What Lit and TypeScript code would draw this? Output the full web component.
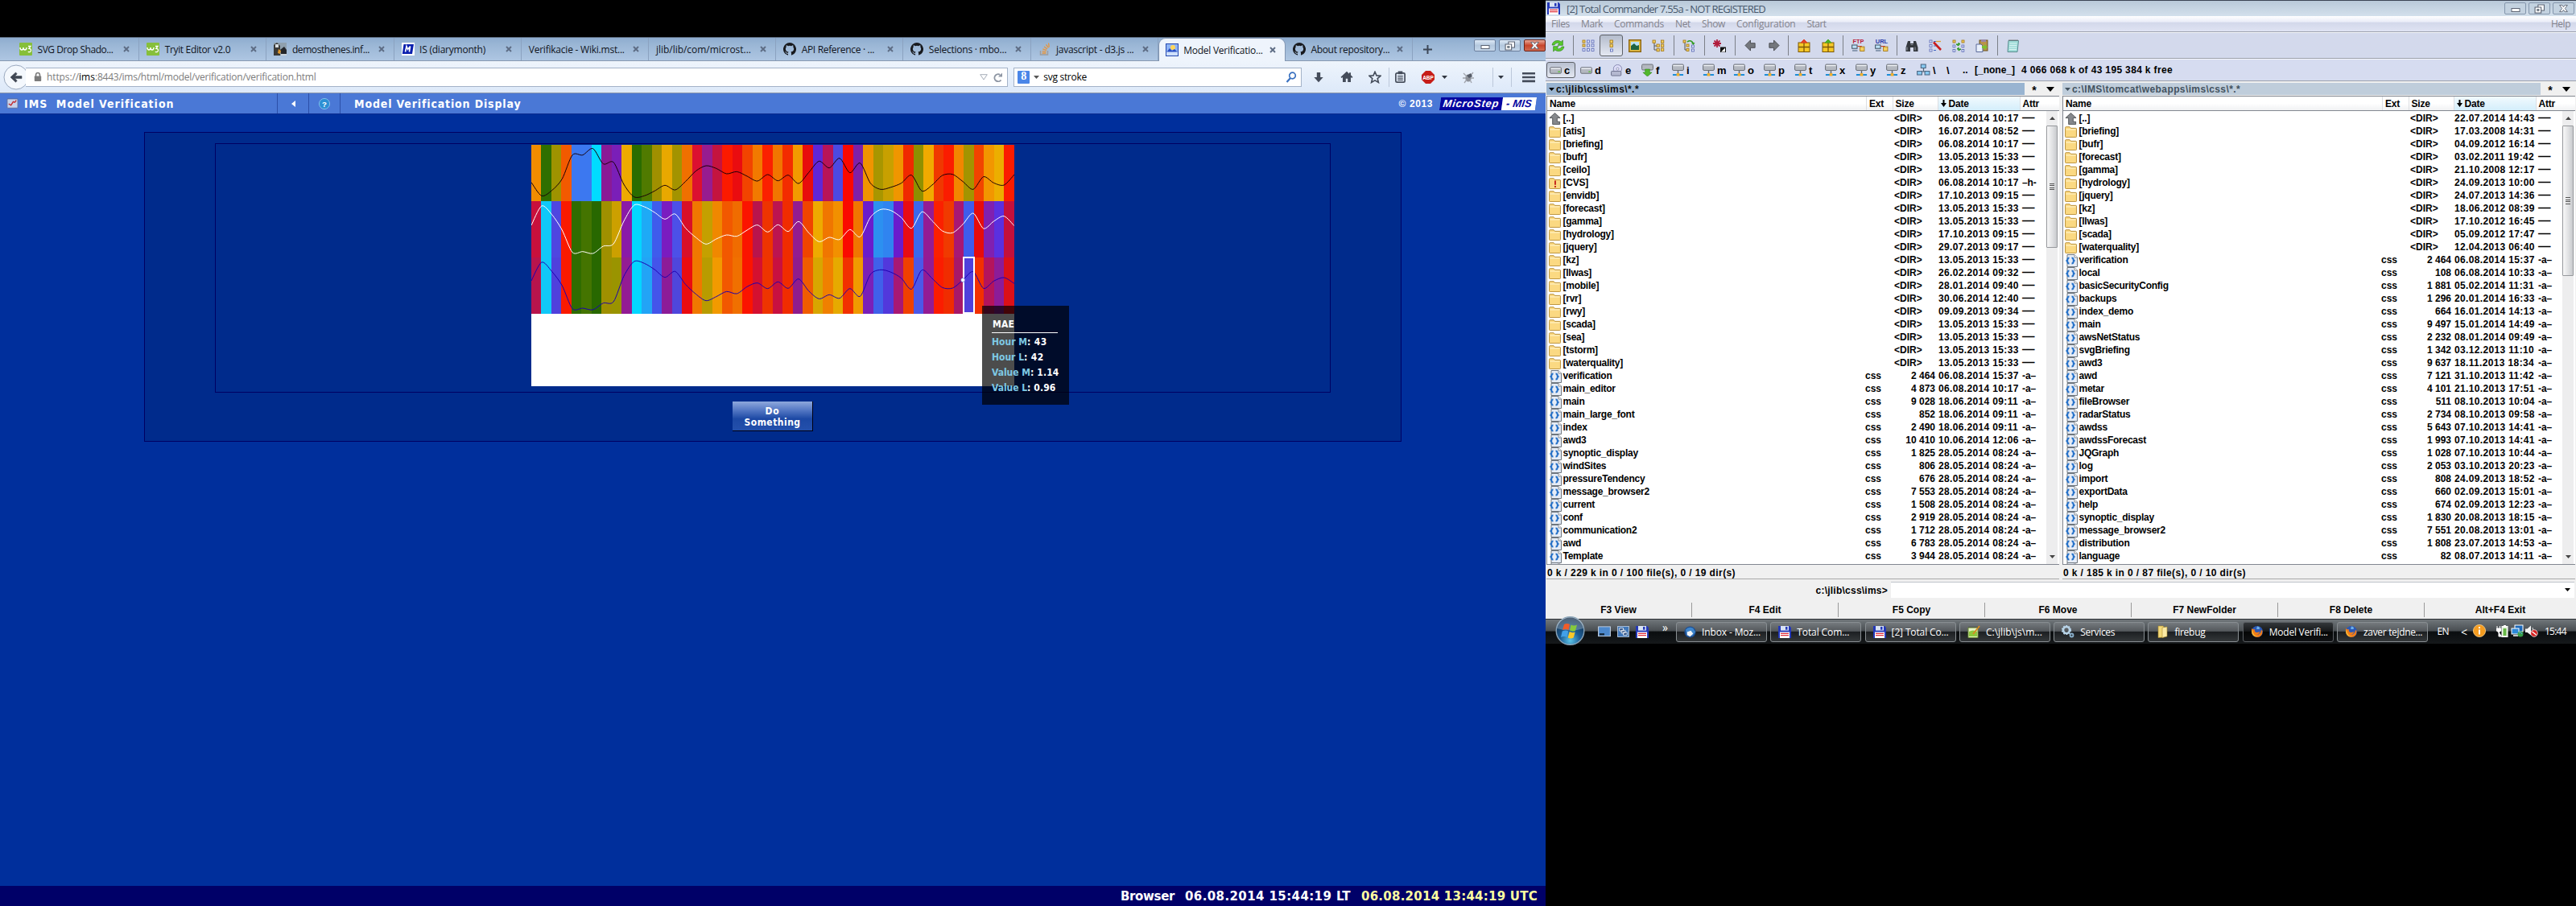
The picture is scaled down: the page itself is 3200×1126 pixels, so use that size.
import { LitElement, html, svg, css, nothing } from "lit";
import { customElement, property } from "lit/decorators.js";

/* ---------- text that is spaced out to a given width ---------- */
@customElement("fit-text")
class FitText extends LitElement {
  @property() text = "";
  @property({ type: Number }) w = 0;
  static styles = css`
    :host { display: inline-block; white-space: pre; flex: none; }
    .t { display: inline-block; }
  `;
  render() {
    return html`<span class="t">${this.text}</span>`;
  }
  updated() {
    const t = this.renderRoot.querySelector(".t") as HTMLElement;
    t.style.letterSpacing = "0";
    const natural = t.getBoundingClientRect().width;
    if (this.w) {
      t.style.letterSpacing = `${(this.w - natural) / this.text.length}px`;
      this.style.width = `${this.w}px`;
    }
  }
}
const fit = (text: string, w: number) => html`<fit-text .text=${text} .w=${w}></fit-text>`;

/* ---------- icons ---------- */
const ic = (body: unknown, w = 16, h = 16, vb = "0 0 16 16") =>
  html`<svg class="ic" width=${w} height=${h} viewBox=${vb} preserveAspectRatio="none">${body}</svg>`;

const w3Icon = ic(svg`<rect width="16" height="16" rx="1" fill="#86bf3a"/><path d="M1 6q0 3 2 3t2-3q0 3 2 3t2-3" fill="none" stroke="#fff" stroke-width="1.4"/><path d="M11 4.5h3l-2 2.8q3 0 2.400 3-1 2.200-3.600 1" fill="none" stroke="#fff" stroke-width="1.300"/>`);
const demoIcon = ic(svg`<rect width="16" height="16" fill="#8fa0ae"/><path d="M0 3l4-3 4 4v12H0z" fill="#3a3a38"/><path d="M2 2h4v4H2z" fill="#d8dde0"/><path d="M8 9l5-4 3 4v5H9z" fill="#23262b"/><path d="M6 8l3 2-1 4-3-1z" fill="#e0982c"/><path d="M9 14h7v2H9z" fill="#c8d2da"/>`);
const isIcon = ic(svg`<rect width="16" height="16" fill="#fff"/><path d="M2.500 2H15l-2 12H.8z" fill="#0a1fae"/><path d="M4.500 11.500L6 4.500l1.600 4 3-4-1.200 7" fill="none" stroke="#fff" stroke-width="1.600"/>`);
const ghIcon = ic(svg`<path fill="#181a1e" fill-rule="evenodd" d="M8 0a8 8 0 0 0-2.530 15.590c.4.070.550-.170.550-.380v-1.490c-2.230.490-2.700-.950-2.700-.950-.360-.920-.890-1.170-.890-1.170-.730-.500.050-.490.050-.490.810.060 1.240.830 1.240.830.720 1.230 1.880.870 2.340.670.070-.520.280-.870.510-1.070-1.780-.200-3.650-.890-3.650-3.950 0-.870.310-1.590.820-2.150-.080-.200-.360-1.020.080-2.120 0 0 .670-.210 2.200.820a7.600 7.600 0 0 1 4 0c1.530-1.040 2.200-.820 2.200-.820.440 1.100.160 1.920.080 2.120.510.560.820 1.270.820 2.150 0 3.070-1.870 3.750-3.660 3.950.290.250.540.730.540 1.480v2.190c0 .210.150.460.550.380A8 8 0 0 0 8 0z"/>`);
const soIcon = ic(svg`<path d="M2.500 10v5h9v-5" fill="none" stroke="#9a9c9f" stroke-width="1.500"/><path d="M4.500 13h5M4.600 10.700l5 .5M5.300 7.800l4.700 1.500M7 5l4 2.900M9.500 2.300l2.900 4M12.500.5l.8 5" stroke="#e8953a" stroke-width="1.300"/>`);
const modelIcon = ic(svg`<rect x=".5" y=".5" width="15" height="15" fill="#8fb4f4" stroke="#2448b0"/><circle cx="9" cy="5" r="3" fill="#ffd65a"/><path d="M1 11l4-5 3 3 3-2 4 4z" fill="#2a4fc4"/><path d="M1 10.500h14V15H1z" fill="#cfe0fb"/>`);

const backIcon = ic(svg`<circle cx="16" cy="16" r="15" fill="#f4f8fd" stroke="#9aa9bf"/><path d="M9 16l6.500-6 1.700 1.900-2.700 2.700h8.500v3h-8.500l2.700 2.700-1.700 1.900z" fill="#3f4653" stroke="#3f4653" stroke-width=".6"/>`, 32, 32, "0 0 32 32");
const lockIcon = ic(svg`<path d="M2.500 6V4.500a2.500 3 0 0 1 5 0V6" fill="none" stroke="#7b7b7b" stroke-width="1.600"/><rect x=".8" y="5.500" width="8.400" height="6.500" rx=".8" fill="#7b7b7b"/>`, 10, 13, "0 0 10 13");
const reloadIcon = ic(svg`<path d="M10.500 9.500A4.500 4.500 0 1 1 9.200 2.800" fill="none" stroke="#8e96a3" stroke-width="1.900"/><path d="M7 5.500h5V.5z" fill="#8e96a3"/>`, 12, 12, "0 0 12 12");
const magIcon = ic(svg`<circle cx="8.500" cy="5" r="3.800" fill="none" stroke="#3a71c0" stroke-width="1.700"/><path d="M6 8l-4.500 5" stroke="#3a71c0" stroke-width="2.200"/>`, 14, 14, "0 0 14 14");
const dlIcon = ic(svg`<path d="M5.500 1h5v7h4L8 15 1.500 8h4z" fill="#444c5a"/>`, 14, 14);
const homeIcon = ic(svg`<path d="M8 .8L.5 8.200l1.200 1.300L3 8.400V15h3.800v-4.500h2.400V15H13V8.400l1.300 1.100 1.200-1.300-2.500-2.500V2.500h-2V4z" fill="#444c5a"/>`, 16, 15);
const starIcon = ic(svg`<path d="M8 1.300l2 4.600 5 .4-3.800 3.300 1.200 4.900L8 11.900l-4.400 2.600 1.200-4.900L1 6.300l5-.4z" fill="none" stroke="#444c5a" stroke-width="1.600"/>`);
const clipIcon = ic(svg`<rect x="2" y="3" width="12" height="12" rx="1.500" fill="none" stroke="#444c5a" stroke-width="1.800"/><path d="M5 .5h6v4H5zM4.500 6.500h7v1.300h-7zM4.500 9h7v1.300h-7zM4.500 11.500h7v1.300h-7z" fill="#444c5a"/>`, 15, 15);
const abpIcon = ic(svg`<path d="M5 0h6l5 5v6l-5 5H5l-5-5V5z" fill="#c61d18"/><text x="8" y="10.600" font-family="Liberation Sans" font-weight="bold" font-size="6.500" text-anchor="middle" fill="#fff">ABP</text>`);
const bugIcon = ic(svg`<ellipse cx="8" cy="9" rx="3.600" ry="4.500" fill="#8c9098"/><path d="M2 3l5 5M14 2L9 8M1 9h4M11 9h4M3 15l3-4M12 15l-2-4" stroke="#a0a4ac" stroke-width="1.300"/><path d="M6 6l5-3 2 4-4 2z" fill="#555b66"/>`);
const burgerIcon = ic(svg`<path d="M0 1h16v3H0zM0 6.500h16v3H0zM0 12h16v3H0z" fill="#444c5a"/>`, 16, 14);
const triIcon = (color = "#2f3540") => ic(svg`<path d="M0 0h8L4 5z" fill=${color}/>`, 7, 4, "0 0 8 5");
const appIcon = ic(svg`<rect x="1" y="1" width="14" height="13" rx="1" fill="#c7d2ea" stroke="#5a6a9a"/><path d="M3 8l3 2 3-5 2 1 2-3" fill="none" stroke="#c2282c" stroke-width="1.500"/>`, 15, 14);
const helpIcon = ic(svg`<circle cx="8" cy="8" r="7.500" fill="#2c8fd4" stroke="#8cc6ee"/><text x="8" y="12" font-size="11" font-weight="bold" text-anchor="middle" font-family="Liberation Sans" fill="#fff">?</text>`, 14, 14);

const floppy = ic(svg`<path d="M0 0h14l2 2v14H0z" fill="#2438b8"/><rect x="3" y="0" width="10" height="6" fill="#d8e2f4"/><rect x="9" y="1" width="2.500" height="4" fill="#2438b8"/><rect x="2" y="8" width="12" height="8" fill="#fff"/><path d="M3 10h10M3 12.500h10" stroke="#e0303c" stroke-width="1.300"/>`, 16, 15);
const refreshI = ic(svg`<g stroke="#247a10" stroke-width=".6" fill="#58cc2c"><path d="M1 7Q2 1.500 7.500 1.500q2.500 0 4 1.500L13.500 1v6.300H7.500L9.500 5Q8.500 4.200 7 4.300 4.500 4.500 3.600 7z"/><path d="M15 9q-1 5.500-6.500 5.500-2.500 0-4-1.500L2.500 15V8.700h6L6.500 11q1 .8 2.500.7 2.500-.2 3.400-2.700z"/></g>`, 17, 16);
const boxes = (pts: number[][], fill: string, stroke: string, s = 3) =>
  pts.map(([x, y]) => svg`<rect x=${x} y=${y} width=${s} height=${s} fill=${fill} stroke=${stroke} stroke-width=".8"/>`);
const gridI = ic(svg`${boxes([[1, 1], [1, 6]], "#f4cf60", "#a07410")}${boxes([[1, 11.5], [6.500, 1], [6.500, 6], [6.500, 11.500], [12, 1], [12, 6], [12, 11.500]], "#dfe6fa", "#5866b4")}`);
const briefI = ic(svg`${boxes([[6, 1], [6, 6]], "#f4cf60", "#a07410", 3.500)}${boxes([[6.500, 12]], "#dfe6fa", "#5866b4")}`);
const photoI = ic(svg`<rect x=".7" y=".7" width="14.600" height="14.600" fill="#e8c34a" stroke="#8c6410" stroke-width="1.400"/><rect x="3" y="3" width="10" height="10" fill="#b8e0f4"/><path d="M3 13V8l4-3 3 3 3-1v6z" fill="#1f6440"/>`);
const treeI = ic(svg`<path d="M3 4v9h4M3 8h4" fill="none" stroke="#555"/>${boxes([[1, 1], [6, 6], [6, 11.500], [11.500, 1], [11.500, 6], [11.500, 11]], "#f4cf60", "#a07410", 3.300)}`);
const swapI = ic(svg`<path d="M3 4v9h3" fill="none" stroke="#555"/>${boxes([[1, 1], [5, 6], [5, 11.500]], "#f4cf60", "#a07410")}${boxes([[11.500, 7], [11.500, 12]], "#dfe6fa", "#5866b4")}<path d="M6 3q4-3 7 1" fill="none" stroke="#2f9a20" stroke-width="1.600"/><path d="M11 4h4.500l-2 3z" fill="#2f9a20"/>`);
const starBoxI = ic(svg`<path d="M5 0v10M0 5h10M1.500 1.500l7 7M8.500 1.500l-7 7" stroke="#b01c3c" stroke-width="1.800"/><rect x="9.500" y="10" width="6" height="6" fill="#fff" stroke="#111"/><path d="M10 10h5.500l-5.500 5.500z" fill="#111"/>`);
const arrL = ic(svg`<path d="M1 8l7-7v4h6v6H8v4z" fill="#74777c" stroke="#4a4c50"/>`, 15, 15);
const arrR = ic(svg`<path d="M15 8L8 1v4H2v6h6v4z" fill="#74777c" stroke="#4a4c50"/>`, 15, 15);
const pack = (c: string) => ic(svg`<rect x="1" y="4" width="14" height="11.500" fill="#f6c828" stroke="#7c5808"/><path d="M8 4v11M1 9.500h14" stroke="#7c5808" stroke-width="1.300"/><path d="M8 0l4 4H4z" fill=${c} stroke=${c}/>`);
const netMini = (label: string) => ic(svg`<text x="8" y="5.800" font-size="7" font-weight="bold" font-family="Liberation Sans" text-anchor="middle" fill=${label === "FTP" ? "#b81c38" : "#2638a8"}>${label}</text><rect x=".6" y="7.500" width="6" height="4" fill="#bfe4f8" stroke="#456"/><rect x="1" y="13" width="6" height="2" fill="#8898b0"/><rect x="10" y="9.500" width="5" height="5" fill="#f4cf60" stroke="#a07410" stroke-width=".8"/><path d="M7 9h5" stroke="#c04020"/>`, 17, 17);
const binoI = ic(svg`<path d="M3 2h3v3h4V2h3l2.500 8v5H10v-5H6v5H.5v-5z" fill="#34383e"/><path d="M2 9.500v4M12 9.500v4M6.500 6.500h3" stroke="#8a9098" stroke-width="1.200"/>`);
const renI = ic(svg`${boxes([[1, 1], [1, 6.500], [1, 12]], "#dfe6fa", "#5866b4")}<path d="M6 2.500h3M6 8h3M6 13.500h3" stroke="#4468c0"/><path d="M6 3.500l9 9.500" stroke="#c81c1c" stroke-width="2.600"/><path d="M9 2.500h6" stroke="#e0a030" stroke-width="1.300"/>`);
const syncI = ic(svg`${boxes([[1, 1], [12, 1]], "#f4cf60", "#a07410")}${boxes([[1, 7], [1, 12.500], [12, 7], [12, 12.500]], "#dfe6fa", "#5866b4", 2.800)}<path d="M5 6h5l-2-2v4zM11 12H6l2-2v4z" fill="#2f9a20" stroke="#2f9a20"/>`);
const pasteI = ic(svg`<rect x="5" y="1" width="10" height="13" fill="#b8934a" stroke="#6c5420"/><path d="M7 0h6v3H7z" fill="#98a"/><path d="M1 6h6l2 2v7.500H1z" fill="#e8effc" stroke="#5a6a9a"/><path d="M8 8h3V6l4 3.500-4 3.500v-2H8z" fill="#7cc030"/>`);
const noteI = ic(svg`<path d="M2 1.500h12.500L13 15.500H1z" fill="#9fdcd8" stroke="#5a8c90"/><path d="M3.500 5h9M3.300 7.500h9M3 10h9M3 12.500h9" stroke="#eafafa" stroke-width=".8"/><path d="M2.500 1h12" stroke="#666" stroke-dasharray="1 1" stroke-width="1.600"/>`);

const hdd = ic(svg`<rect x=".6" y="4" width="14.800" height="8" rx="1.500" fill="#b4b8c0" stroke="#6a6e76"/><path d="M1.500 5.500h13" stroke="#f2f4f8" stroke-width="1.400"/><rect x="11" y="9" width="3" height="1.500" fill="#60c040"/>`, 15, 15);
const cdI = ic(svg`<circle cx="9" cy="6" r="5.500" fill="#dcdcf6" stroke="#8488b0"/><circle cx="9" cy="6" r="1.600" fill="#fff" stroke="#8488b0"/><rect x=".6" y="9" width="13" height="6" rx="1" fill="#b4b8d0" stroke="#6a6e8a"/>`, 15, 15);
const hddF = ic(svg`<rect x=".6" y="1" width="14.800" height="7" rx="1.500" fill="#b4b8c0" stroke="#6a6e76"/><path d="M5 7h6v4h3l-6 5-6-5h3z" fill="#52b82c" stroke="#2f8418" stroke-width=".6"/>`, 15, 16);
const hddN = ic(svg`<rect x=".6" y="1" width="14.800" height="7.500" rx="1.500" fill="#b4b8c0" stroke="#6a6e76"/><path d="M1.500 2.500h13" stroke="#f2f4f8" stroke-width="1.300"/><path d="M8 9v3" stroke="#666" stroke-width="1.500"/><path d="M1 14h14" stroke="#1c8cd8" stroke-width="2"/><rect x="6" y="12" width="4" height="3.500" fill="#f0b030"/>`, 15, 16);
const netI = ic(svg`<path d="M8 6v4M3 10h10" stroke="#567" stroke-width="1.200"/>${[[5, 1], [.6, 9.500], [9.500, 9.500]].map(([x, y]) => svg`<rect x=${x} y=${y} width="5.500" height="4.500" fill="#86c8f0" stroke="#4a6480"/>`)}`, 17, 16);

const upI = ic(svg`<path d="M8 .5L15 7h-4v5h3.500v3.500H5V7H1z" fill="#85888c" stroke="#505356"/>`, 15, 15);
const folderI = ic(svg`<path d="M.6 3V14.500q0 1 1 1h12.800q1 0 1-1V3.500q0-.8-1-.8H8L6.500.8H1.500q-.9 0-.9 1z" fill="#fbd982" stroke="#b4882c"/><path d="M1.500 4.500h13" stroke="#fff0c0" stroke-width="1.500"/>`, 15, 14);
const folderX = ic(svg`<path d="M.6 3V14.500q0 1 1 1h12.800q1 0 1-1V3.500q0-.8-1-.8H8L6.500.8H1.500q-.9 0-.9 1z" fill="#fbd982" stroke="#b4882c"/><path d="M8.500 4v6M8.500 11.500v2.200" stroke="#c42018" stroke-width="2"/>`, 15, 14);
const cssI = ic(svg`<path d="M3 .5h9l3.500 3.500v11.500H3z" fill="#e6ecf6" stroke="#6e767e"/><path d="M12 .5V4h3.500" fill="#fff" stroke="#6e767e" stroke-width=".8"/><path d="M5.500 4.500q-2 0-2 1.700T1.500 8q2 .2 2 1.800t2 1.700M8.500 4.500q2 0 2 1.700T12.500 8q-2 .2-2 1.800t-2 1.700" fill="none" stroke="#2470c8" stroke-width="2"/>`, 16, 16);

const birdI = ic(svg`<circle cx="8" cy="8" r="7.500" fill="#1c4f94"/><path d="M2 5q4-5 10-2l3 5-4 5-7-1z" fill="#3f86cc"/><path d="M4 8l5-2 3 4-4 4-4-2z" fill="#f2f4f6"/>`, 15, 15);
const nppI = ic(svg`<path d="M1 3h12v12.500H1z" fill="#e6f4c8" stroke="#6a8c30"/><path d="M2 8q5-3 10 0v6H2z" fill="#8cc83c"/><path d="M15 1L7 11" stroke="#d88a20" stroke-width="2"/><path d="M1.500 2.500h11" stroke="#444" stroke-dasharray="1 1" stroke-width="1.600"/>`);
const gearI = ic(svg`<circle cx="6" cy="6" r="4" fill="none" stroke="#b8d4e8" stroke-width="2.600"/><circle cx="6" cy="6" r="5.500" fill="none" stroke="#b8d4e8" stroke-width="1.200" stroke-dasharray="2 1.500"/><circle cx="12.500" cy="12.500" r="2" fill="none" stroke="#8ab0cc" stroke-width="1.800"/>`);
const foldI = ic(svg`<path d="M3 1h6l1 1v13l-7 .5z" fill="#f2d878" stroke="#a88828" stroke-width=".6"/><path d="M8 3l6-1v12l-6 1.500z" fill="#fbeaa4" stroke="#a88828" stroke-width=".6"/>`);
const foxI = ic(svg`<circle cx="8" cy="8" r="7" fill="#2c58b4"/><path d="M8 1.500a3 3 0 0 1 3 3q-2 1-4 0z" fill="#6cb0e8"/><path d="M1 4q2 2 4 1-1 3 2 4 3 0 4-1 0 3-4 4 5 0 6-6l1.500 1q0 8-7 8Q0 14 1 4z" fill="#f07c18"/><path d="M2 6q1 7 7 8-8 1-8-7z" fill="#f8b830"/>`);
const deskI = ic(svg`<rect x=".6" y="1" width="14.800" height="13.500" fill="#4c88cc" stroke="#c8d4e4"/><rect x="2" y="10.500" width="6" height="2.500" fill="#123"/>`, 16, 14);
const flipI = ic(svg`<rect x=".6" y=".6" width="14.800" height="14.800" fill="#3f76b8" stroke="#b8c8dc"/><path d="M3 3h5v4H3zM5.500 6h5v4h-5zM8 9h5v4H8z" fill="#274a80" stroke="#fff" stroke-width=".9"/>`, 15, 14);
const orb = ic(svg`
  <defs><radialGradient id="og" cx=".5" cy=".85" r=".8"><stop offset="0" stop-color="#5cc4e8"/><stop offset=".45" stop-color="#1c5c94"/><stop offset="1" stop-color="#14304c"/></radialGradient></defs>
  <circle cx="20.500" cy="18" r="17.300" fill="url(#og)" stroke="#8aa4b8" stroke-width="1.400"/>
  <path d="M4 15a16.500 14 0 0 1 33 0q-16 5-33 0z" fill="#fff" opacity=".25"/>
  <path d="M13 10q3.500-2 7 0l-1.500 7q-3.500-2-7.500 0z" fill="#f05c28"/><path d="M21.500 10.500q4 2 7.500 0l-2 7.500q-3.500 1.500-7-.5z" fill="#86c83c"/>
  <path d="M10.700 18.500q4-2 7.500 0L16.500 26q-3.500-2-7.500 0z" fill="#42a0e8"/><path d="M19.700 19q3.500 2 7 .5l-2 7q-3.500 2-7 0z" fill="#fbc828"/>`, 41, 36, "0 0 41 36");
const infoI = ic(svg`<circle cx="8" cy="8" r="7.600" fill="#f49c20" stroke="#fbd08c" stroke-width=".8"/><path d="M8 6.500v6M8 3v2" stroke="#fff" stroke-width="2"/>`);
const batI = ic(svg`<rect x="7" y="2.500" width="7" height="13" fill="#e8f4e0" stroke="#fff"/><rect x="8.500" y="5" width="4" height="9" fill="#68b848"/><path d="M9 1h3v2H9z" fill="#fff"/><path d="M1 2v3M4.500 2v3M.5 5h5v3l-1.500 1.500H2L.5 8zM3 9v6h4" stroke="#fff" fill="#fff"/>`);
const lanI = ic(svg`<rect x="5" y="1" width="10" height="8" fill="#1c68b8" stroke="#fff"/><rect x="1" y="5" width="9" height="7" fill="#2c88d8" stroke="#fff"/><path d="M3 14h6" stroke="#fff" stroke-width="1.500"/><circle cx="12" cy="12" r="3.500" fill="#38a048"/><path d="M10 11q2-3 4 1" stroke="#60a8f0" fill="none"/>`);
const sndI = ic(svg`<path d="M0 5.500h2.500L7 1.500v12L2.500 10H0z" fill="#f4f4f4"/><path d="M9 4q1.500 3 0 6" fill="none" stroke="#ddd"/><circle cx="11" cy="11" r="4.300" fill="#d42020" stroke="#fff" stroke-width=".7"/><path d="M8.500 9l5 4" stroke="#fff" stroke-width="1.500"/>`);

const minI = ic(svg`<rect x="1" y="5.500" width="10" height="4" fill="#fff" stroke="#5a6272"/>`, 12, 12, "0 0 12 12");
const restI = ic(svg`<rect x="4.500" y="1" width="7" height="7" fill="#fff" stroke="#5a6272"/><rect x="1" y="4" width="7" height="7" fill="#fff" stroke="#5a6272"/><rect x="3.500" y="6.500" width="2" height="2" fill="#9aa" stroke="#5a6272" stroke-width=".8"/>`, 13, 12, "0 0 12 12");
const closeI = ic(svg`<path d="M1.500 1.500h3L6 4l1.500-2.500h3L7.700 6l2.800 4.500h-3L6 8l-1.500 2.500h-3L4.300 6z" fill="#fff" stroke="#5a6272" stroke-width=".9"/>`, 13, 11, "0 0 12 12");

/* ---------- data ---------- */
type Tab = { t: string; w: number; icon?: unknown; on?: boolean };
const tabs: Tab[] = [
  { t: "SVG Drop Shado...", w: 94, icon: w3Icon },
  { t: "Tryit Editor v2.0", w: 81.5, icon: w3Icon },
  { t: "demosthenes.inf...", w: 96, icon: demoIcon },
  { t: "IS (diarymonth)", w: 82, icon: isIcon },
  { t: "Verifikacie - Wiki.mst...", w: 119 },
  { t: "jlib/lib/com/microst...", w: 118 },
  { t: "API Reference · ...", w: 90.5, icon: ghIcon },
  { t: "Selections · mbo...", w: 96.5, icon: ghIcon },
  { t: "javascript - d3.js ...", w: 96.5, icon: soIcon },
  { t: "Model Verificatio...", w: 98.5, icon: modelIcon, on: true },
  { t: "About repository...", w: 98, icon: ghIcon },
];

const rowColors = [
  "f28c00 2f6f00 9f9300 f25a00 3c78f0 3c78f0 00dcff 8a1a96 7a1fb8 eeaa00 2a6c00 507a00 a09000 e8a800 a39300 f07000 dc1030 971c90 c4143f fb1a00 ea0c10 f24400 f27a00 fb2000 f17600 f32c00 f29a00 e80c0c 6026d6 b81458 4d49e2 fa0800 7f20a8 f09400 a89600 c8a000 f09600 f02a00 8f9000 f0aa00 f03800 fb1c00 f28600 a39400 f24400 f29600 ecae00 fb1c00",
  "c8103c 10c8f8 4f46e0 fa1a00 2f6c00 447400 286800 9f9000 cca000 8a1aa8 04d6ff 1eaaf6 3f5cec 7a1cc0 4c50e8 d81028 f07800 c4a000 f08800 f25800 f06c00 fb1400 b8144c ee3400 bc1450 f02c00 921c90 f04400 eeaa00 f07600 f29000 fa0a00 f07600 6a1ccc 2c90f0 3084f0 6a1ccc e80c14 3a68ec 941c94 fb2000 f03a00 a81874 3f5cec e60c0c 8020b0 5a30e0 c4103c",
  "b8144c 10c8f8 5040dc fa1a00 2f6c00 447400 286800 9f9000 9a9400 931c94 04d6ff 22a4f6 4454ea 8c1c98 4f46dc ea0c10 f07800 b89c00 f29a00 f25800 f07000 fb1400 d41030 ee3400 c81040 f02c00 8f1c8c f05c00 d8a600 f08000 e6aa00 f23000 f09a00 7a20b8 4060ea 5238dc a81874 f04000 4c58e8 931c94 fb1c00 f02c00 a81868 5040dc f23000 b4145c 8c1c98 dc1018",
].map((r) => r.split(" "));
const lineColors = ["#1a0008", "#ffffff", "#1c00b0"];
/* line heights in thirds of a pixel, counted from five pixels above the chart */
const series = [
  [155, 205, 185, 142, 53, 53, 29, 86, 80, 162, 209, 205, 187, 166, 183, 152, 113, 93, 103, 123, 115, 132, 150, 126, 149, 128, 159, 118, 76, 101, 65, 119, 83, 158, 181, 173, 158, 128, 187, 165, 129, 125, 152, 181, 134, 157, 165, 126],
  [315, 243, 275, 333, 416, 413, 420, 393, 384, 300, 240, 246, 267, 292, 273, 325, 360, 385, 366, 351, 356, 333, 314, 340, 313, 338, 301, 343, 376, 360, 368, 331, 358, 285, 256, 260, 286, 326, 265, 298, 336, 343, 311, 270, 327, 300, 281, 317],
  [522, 453, 487, 540, 626, 624, 630, 605, 600, 505, 450, 457, 480, 509, 487, 535, 571, 596, 581, 562, 570, 544, 530, 551, 526, 550, 515, 560, 589, 574, 587, 551, 580, 498, 481, 490, 512, 553, 482, 513, 547, 549, 519, 488, 550, 523, 510, 532],
];
const curve = (v: number[]) => {
  const p = v.map((y, i) => [(i * 600) / 47, y / 3 - 5]);
  let d = `M${p[0]}`;
  for (let i = 0; i < p.length - 1; i++) {
    const a = p[Math.max(0, i - 1)], b = p[i], c = p[i + 1], e = p[Math.min(p.length - 1, i + 2)];
    const k = 1 / 7;
    d += `C${b[0] + (c[0] - a[0]) * k},${b[1] + (c[1] - a[1]) * k} ${c[0] - (e[0] - b[0]) * k},${c[1] - (e[1] - b[1]) * k} ${c}`;
  }
  return d;
};

const D = "<DIR>";
type Row = [string, string, string, string?];
const leftRows: Row[] = [
  ["[..]", D, "06.08.2014 10:17"], ["[atis]", D, "16.07.2014 08:52"], ["[briefing]", D, "06.08.2014 10:17"],
  ["[bufr]", D, "13.05.2013 15:33"], ["[ceilo]", D, "13.05.2013 15:33"], ["[CVS]", D, "06.08.2014 10:17", "–h-"],
  ["[envidb]", D, "17.10.2013 09:15"], ["[forecast]", D, "13.05.2013 15:33"], ["[gamma]", D, "13.05.2013 15:33"],
  ["[hydrology]", D, "17.10.2013 09:15"], ["[jquery]", D, "29.07.2013 09:17"], ["[kz]", D, "13.05.2013 15:33"],
  ["[llwas]", D, "26.02.2014 09:32"], ["[mobile]", D, "28.01.2014 09:40"], ["[rvr]", D, "30.06.2014 12:40"],
  ["[rwy]", D, "09.09.2013 09:34"], ["[scada]", D, "13.05.2013 15:33"], ["[sea]", D, "13.05.2013 15:33"],
  ["[tstorm]", D, "13.05.2013 15:33"], ["[waterquality]", D, "13.05.2013 15:33"],
  ["verification", "2 464", "06.08.2014 15:37"], ["main_editor", "4 873", "06.08.2014 10:17"], ["main", "9 028", "18.06.2014 09:11"],
  ["main_large_font", "852", "18.06.2014 09:11"], ["index", "2 490", "18.06.2014 09:11"], ["awd3", "10 410", "10.06.2014 12:06"],
  ["synoptic_display", "1 825", "28.05.2014 08:24"], ["windSites", "806", "28.05.2014 08:24"], ["pressureTendency", "676", "28.05.2014 08:24"],
  ["message_browser2", "7 553", "28.05.2014 08:24"], ["current", "1 508", "28.05.2014 08:24"], ["conf", "2 919", "28.05.2014 08:24"],
  ["communication2", "1 712", "28.05.2014 08:24"], ["awd", "6 783", "28.05.2014 08:24"], ["Template", "3 944", "28.05.2014 08:24"],
];
const rightRows: Row[] = [
  ["[..]", D, "22.07.2014 14:43"], ["[briefing]", D, "17.03.2008 14:31"], ["[bufr]", D, "04.09.2012 16:14"],
  ["[forecast]", D, "03.02.2011 19:42"], ["[gamma]", D, "21.10.2008 12:17"], ["[hydrology]", D, "24.09.2013 10:00"],
  ["[jquery]", D, "24.07.2013 14:36"], ["[kz]", D, "18.06.2012 08:39"], ["[llwas]", D, "17.10.2012 16:45"],
  ["[scada]", D, "05.09.2012 17:47"], ["[waterquality]", D, "12.04.2013 06:40"],
  ["verification", "2 464", "06.08.2014 15:37"], ["local", "108", "06.08.2014 10:33"], ["basicSecurityConfig", "1 881", "05.02.2014 11:31"],
  ["backups", "1 296", "20.01.2014 16:33"], ["index_demo", "664", "16.01.2014 14:13"], ["main", "9 497", "15.01.2014 14:49"],
  ["awsNetStatus", "2 232", "08.01.2014 09:49"], ["svgBriefing", "1 342", "03.12.2013 11:10"], ["awd3", "9 637", "18.11.2013 18:34"],
  ["awd", "7 121", "31.10.2013 11:42"], ["metar", "4 101", "21.10.2013 17:51"], ["fileBrowser", "511", "08.10.2013 10:04"],
  ["radarStatus", "2 734", "08.10.2013 09:58"], ["awdss", "5 643", "07.10.2013 14:41"], ["awdssForecast", "1 993", "07.10.2013 14:41"],
  ["JQGraph", "1 028", "07.10.2013 10:44"], ["log", "2 053", "03.10.2013 20:23"], ["import", "808", "24.09.2013 18:52"],
  ["exportData", "660", "02.09.2013 15:01"], ["help", "674", "02.09.2013 12:23"], ["synoptic_display", "1 830", "20.08.2013 18:15"],
  ["message_browser2", "7 551", "20.08.2013 13:01"], ["distribution", "1 808", "23.07.2013 14:53"], ["language", "82", "08.07.2013 14:11"],
];

const SEP = "sep";
const tools: [number, unknown][] = [
  [30, refreshI], [9, SEP], [28, gridI], [29, html`<span class="pressed">${briefI}</span>`], [29, photoI], [30, treeI], [8, SEP], [30, swapI], [8, SEP],
  [30, starBoxI], [8, SEP], [30, arrL], [28, arrR], [9, SEP], [30, pack("#e04428")], [29, pack("#4cae28")], [8, SEP],
  [30, netMini("FTP")], [29, netMini("URL")], [8, SEP], [30, binoI], [28, renI], [29, syncI], [30, pasteI], [8, SEP], [32, noteI],
];
const drives: [string, unknown][] = [
  ["c", hdd], ["d", hdd], ["e", cdI], ["f", hddF], ["i", hddN], ["m", hddN], ["o", hddN], ["p", hddN], ["t", hddN], ["x", hddN], ["y", hddN], ["z", hddN], ["\\", netI],
];
const menus: [string, number, number][] = [
  ["Files", 23, 14], ["Mark", 27, 14], ["Commands", 62, 14], ["Net", 19, 14], ["Show", 29, 14], ["Configuration", 73.5, 14], ["Start", 24, 0],
];
const tasks: [string, unknown, number, boolean?][] = [
  ["Inbox - Moz...", birdI, 73], ["Total Com...", floppy, 65], ["[2] Total Co...", floppy, 71], ["C:\\jlib\\js\\m...", nppI, 70],
  ["Services", gearI, 43], ["firebug", foldI, 38], ["Model Verifi...", foxI, 73, true], ["zaver tejdne...", foxI, 73],
];

/* ---------- file panel ---------- */
@customElement("file-panel")
class FilePanel extends LitElement {
  @property() path = "";
  @property({ type: Number }) pathWidth = 0;
  @property({ type: Boolean, reflect: true }) active = false;
  @property({ attribute: false }) rows: Row[] = [];
  @property({ type: Number }) thumb = 0;
  @property() status = "";
  @property({ type: Number }) statusWidth = 0;
  static styles = css`
    :host { display: flex; flex-direction: column; width: 637px; font: bold 12px "Liberation Sans", Arial, sans-serif; color: #000; }
    .ic { display: block; flex: none; }
    .path { display: flex; align-items: center; height: 15px; background: #f0f0f0; }
    .bar { display: flex; align-items: center; gap: 2px; width: 591px; height: 15px; padding-left: 3px; background: #bfcddb; color: #43525f; }
    :host([active]) .bar { background: #99b4d1; color: #101010; }
    .star { width: 24px; text-align: center; font-size: 14px; line-height: 15px; padding-top: 3px; }
    .drop { width: 16px; display: flex; justify-content: center; }
    .box { display: flex; flex-direction: column; height: 583px; margin-top: 1px; border: 1px solid #828790; border-right: 0; box-sizing: border-box; background: #fff; }
    .head { display: flex; height: 17px; line-height: 18px; background: linear-gradient(#fff 50%, #f0f1f3); border-bottom: 1px solid #828790; letter-spacing: -.2px; }
    .head .c { box-sizing: border-box; border-right: 1px solid #dcdee2; padding-left: 3px; }
    .hn { width: 397px; } .he { width: 32.5px; } .hs { width: 56px; } .hd { width: 102px; display: flex; align-items: center; gap: 3px; background: linear-gradient(#f2fafe, #d4eefb); }
    .head .ha { border-right: 0; }
    .body { display: flex; flex: 1; min-height: 0; }
    .list { width: 619px; overflow: hidden; padding-top: 1px; }
    .row { display: grid; grid-template-columns: 19px 376px 34px 53px 4px 101px 3px 1fr; height: 16px; line-height: 17px; align-items: center; white-space: pre; }
    .icon { padding-left: 2px; }
    .num { text-align: right; }
    .num.dir { text-align: left; padding-left: 2px; }
    .date { letter-spacing: .35px; }
    .name { letter-spacing: -.25px; padding-left: .5px; }
    .attr { letter-spacing: -.1px; }
    .attr.dash { font-size: 15.500px; line-height: 12px; padding-bottom: 3px; }
    .part { height: 3px; overflow: hidden; }
    .scroll { display: flex; flex-direction: column; align-items: center; width: 14px; margin: 0 0 0 1px; background: #ededee; }
    .arrow { height: 18px; display: flex; align-items: center; }
    .thumb { width: 12px; border: 1px solid #96989c; border-radius: 1px; background: linear-gradient(90deg, #f8f8f8, #e0e1e3 55%, #c8cacd); display: flex; flex-direction: column; align-items: center; justify-content: center; gap: 1.5px; }
    .grip { width: 6px; height: 1px; background: #555; }
    .grow { flex: 1; }
    .status { height: 18px; line-height: 20px; padding-left: 1px; border-bottom: 1px solid #a8a8a8; background: #f0f0f0; box-sizing: border-box; }
  `;
  private icon(name: string) {
    if (name === "[..]") return upI;
    if (name === "[CVS]") return folderX;
    return name.startsWith("[") ? folderI : cssI;
  }
  render() {
    return html`
      <div class="path">
        <div class="bar">${triIcon(this.active ? "#000" : "#43525f")}${fit(this.path, this.pathWidth)}</div>
        <div class="star">*</div><div class="drop">${ic(svg`<path d="M0 0h10L5 6z"/>`, 10, 6, "0 0 10 6")}</div>
      </div>
      <div class="box">
        <div class="head">
          <span class="c hn">Name</span><span class="c he">Ext</span><span class="c hs">Size</span>
          <span class="c hd">${ic(svg`<path d="M2.500 0h2v4H7L3.500 9 0 4h2.500z"/>`, 7, 9, "0 0 7 9")}Date</span><span class="c ha">Attr</span>
        </div>
        <div class="body">
          <div class="list">
            ${this.rows.map(([n, s, d, a]) => html`<div class="row">
              <span class="icon">${this.icon(n)}</span><span class="name">${n}</span><span>${s === D ? nothing : "css"}</span>
              <span class="num ${s === D ? "dir" : ""}">${s}</span><span></span><span class="date">${d}</span><span></span>
              <span class="attr ${s === D && !a ? "dash" : ""}">${a ?? (s === D ? "—" : "-a–")}</span></div>`)}
            <div class="part"><div class="icon">${cssI}</div></div>
          </div>
          <div class="scroll">
            <div class="arrow">${ic(svg`<path d="M0 4h7L3.500 0z" fill="#444"/>`, 7, 4, "0 0 7 4")}</div>
            <div class="thumb" style="height:${this.thumb}px"><i class="grip"></i><i class="grip"></i><i class="grip"></i><i class="grip"></i></div>
            <div class="grow"></div>
            <div class="arrow">${triIcon("#444")}</div>
          </div>
        </div>
      </div>
      <div class="status">${fit(this.status, this.statusWidth)}</div>
    `;
  }
}

/* ---------- page ---------- */
@customElement("app-root")
class AppRoot extends LitElement {
  static styles = css`
    :host { display: flex; width: 3200px; height: 1126px; background: #000; overflow: hidden; }
    .ic { display: block; flex: none; }
    .browser { display: flex; flex-direction: column; width: 1920px; height: 1080px; padding-top: 46px; font: 12px "Open Sans", "Noto Sans", sans-serif; }
    .tabs { display: flex; height: 30px; box-sizing: border-box; padding-left: 15px; background: linear-gradient(#8eaccf, #9ab6d5 30%, #aec6e2); border-top: 1px solid #5c6b80; border-bottom: 1px solid #8798b0; color: #10141c; }
    .tab { display: flex; align-items: center; width: 158.200px; box-sizing: border-box; height: 28px; padding-left: 9px; gap: 6.500px; border-right: 1px solid #8ba2c0; }
    .tab.on { height: 29px; background: #eef4fc; border: 1px solid #8095b2; border-bottom: 0; border-radius: 9px 9px 0 0; padding-left: 8px; }
    .x { margin-left: auto; margin-right: 11px; }
    .plus { width: 37px; display: flex; align-items: center; justify-content: center; }
    .wbtns { display: flex; gap: 4px; margin-left: 39px; padding-top: 2px; }
    .wb { display: flex; align-items: center; justify-content: center; height: 13px; width: 25px; border: 1px solid #6c7f9c; border-radius: 2px; background: linear-gradient(#dce8f5, #b4c8de 50%, #c4d6ea); }
    .wb.red { background: linear-gradient(#e8a898, #c8452c 50%, #d06a50); border-color: #6a2218; }
    .nav { display: flex; align-items: center; height: 40px; background: linear-gradient(#eef4fc, #dde9f9); box-sizing: border-box; border-bottom: 1px solid #8d98ac; padding-left: 4px; }
    .url { display: flex; align-items: center; width: 1221px; height: 22px; margin-left: -4px; background: #fff; border: 1px solid #a4b3c8; border-left: 0; padding-left: 10px; color: #7c7c7c; gap: 6px; }
    .url .host { color: #000; }
    .addr { display: flex; flex: 1; }
    .url .ic:last-child { margin-right: 6px; }
    .search { display: flex; align-items: center; width: 355px; height: 22px; margin-left: 7px; background: #fff; border: 1px solid #a4b3c8; padding-left: 4px; color: #000; }
    .g { width: 15px; height: 16px; background: #4a86e8; color: #fff; font: bold 14px/14px "Liberation Serif", serif; text-align: center; border-radius: 1px; }
    .search .ic { margin: 0 5px; }
    .grow { flex: 1; }
    .nb { display: flex; align-items: center; justify-content: center; height: 30px; }
    .vs { width: 1px; height: 24px; background: #bcc8da; }
    .app { display: flex; align-items: center; height: 26px; box-sizing: border-box; background: #4a78d6; border-bottom: 1px solid #0c2c90; color: #fff; font: bold 14px "DejaVu Sans Condensed", "DejaVu Sans", Tahoma, sans-serif; font-stretch: condensed; }
    .c1 { display: flex; align-items: center; gap: 7px; width: 345px; height: 25px; padding-left: 8px; box-sizing: border-box; border-right: 1px solid #2c4fa8; }
    .c2 { display: flex; align-items: center; justify-content: center; width: 39px; height: 25px; box-sizing: border-box; border-right: 1px solid #2c4fa8; }
    .title { flex: 1; padding-left: 17px; }
    .copy { font: bold 12px "Liberation Sans", sans-serif; }
    .logo { display: flex; height: 16px; width: 119px; margin: 0 12px 0 9px; font: italic bold 13px/16px "Liberation Sans", sans-serif; transform: skewX(-8deg); overflow: hidden; }
    .l1 { width: 77px; background: #0606a0; text-align: center; } .l2 { width: 42px; background: #fff; color: #0606a0; text-align: center; }
    .page { flex: 1; background: #002f9c; padding: 22px 0 0 179px; }
    .outer { display: flex; flex-direction: column; align-items: center; width: 1560px; height: 370px; border: 1px solid #000062; background: #002b8c; padding-top: 13px; }
    .inner { display: flex; justify-content: center; width: 1384px; height: 307px; border: 1px solid #000062; padding-top: 1px; }
    .chart { position: relative; width: 600px; height: 300px; background: #fff; }
    .tip { position: absolute; left: 560px; top: 200px; width: 108px; height: 122.500px; box-sizing: border-box; padding: 14px 12px; background: rgba(0, 0, 0, .7); color: #fff; font: bold 12px/19px "DejaVu Sans Condensed", "DejaVu Sans", Tahoma, sans-serif; font-stretch: condensed; }
    .tip .h { width: 81px; height: 19px; border-bottom: 1px solid #fff; margin-bottom: 2px; padding-left: 1px; }
    .tip .k { color: #7ec8e4; }
    .tip .r { display: flex; }
    .btn { display: flex; flex-direction: column; align-items: center; justify-content: center; width: 100px; height: 37px; margin-top: 11px; box-sizing: border-box; background: linear-gradient(#8fa8dc, #5478c4 30%, #1c48a4 60%, #2450ac); border-right: 1px solid #001; border-bottom: 1px solid #001; color: #fff; font: bold 12px/14px "DejaVu Sans Condensed", "DejaVu Sans", Tahoma, sans-serif; font-stretch: condensed; padding-top: 1px; }
    .foot { display: flex; align-items: center; justify-content: flex-end; gap: 13px; height: 25px; background: #000068; padding-right: 10px; color: #fff; font: bold 15px "DejaVu Sans", Verdana, sans-serif; }
    .utc { color: #ffffa0; }

    .tc { display: flex; flex-direction: column; width: 1280px; height: 800px; background: #f0f0f0; font: bold 12px "Liberation Sans", Arial, sans-serif; color: #000; }
    .tbar { display: flex; align-items: center; height: 20px; box-sizing: border-box; border-top: 1px solid #3c4454; background: linear-gradient(#b9c9d9, #d3e0ec); padding: 0 2px 0 2px; color: #48586c; font: 13px "Open Sans", "Noto Sans", sans-serif; gap: 2px; }
    .tbar .ttl { margin-left: 6px; flex: 1; }
    .tbar .wb { width: 25px; height: 13px; margin-left: 1px; border-color: #8496ac; background: #c3d2e0; }
    .menu { display: flex; align-items: center; height: 20px; box-sizing: border-box; padding: 0 7px; border-bottom: 1px solid #9ba0ac; background: linear-gradient(#fff, #eaedf8 38%, #d3d8ea 42%, #dfe3f3); color: #83838c; font: 12px "Open Sans", "Noto Sans", sans-serif; }
    .tools { display: flex; align-items: center; height: 33px; box-sizing: border-box; background: #d3d9ec; border-top: 1px solid #f6f8fc; border-bottom: 1px solid #9ba0ac; }
    .tool { display: flex; align-items: center; justify-content: center; }
    .tsep { width: 1px; height: 25px; background: #7c8088; }
    .pressed { display: flex; align-items: center; justify-content: center; width: 27px; height: 25px; border: 1px solid #5c6066; border-radius: 3px; background: linear-gradient(#b4bccc, #e4e8f2); }
    .drives { display: flex; align-items: center; height: 28px; box-sizing: border-box; background: #d6dcf0; border-top: 1px solid #f6f8fc; border-bottom: 1px solid #9ba0ac; padding-left: 1px; }
    .drv { display: flex; align-items: center; gap: 3px; width: 38px; height: 20px; padding-left: 4px; box-sizing: border-box; font-size: 13px; }
    .drv.on { border: 1px solid #5c6066; border-radius: 3px; width: 36px; margin-right: 2px; background: linear-gradient(#b8c0d0, #e4e8f2); padding-left: 3px; }
    .d1 { width: 20px; padding-left: 3px; font-size: 13px; box-sizing: border-box; } .d2 { width: 18px; padding-left: 3px; box-sizing: border-box; }
    .panels { display: flex; gap: 4px; padding: 2px 0 0 1px; }
    .cmd { display: flex; align-items: center; height: 24px; padding-top: 1px; box-sizing: border-box; }
    .cmd .p { width: 427px; text-align: right; padding: 2px 2px 0 0; box-sizing: border-box; }
    .cin { display: flex; align-items: center; justify-content: flex-end; width: 849px; height: 20px; background: #fff; border-top: 1px solid #c0c4cc; padding-right: 5px; box-sizing: border-box; }
    .keys { display: flex; height: 25px; align-items: center; padding-top: 3px; box-sizing: border-box; }
    .key { width: 182px; height: 18px; line-height: 19px; text-align: center; border-right: 1px solid #9a9a9a; box-sizing: border-box; }
    .key:last-child { border-right: 0; flex: 1; }
    .task { display: flex; align-items: center; height: 31px; flex: none; box-sizing: border-box; border-top: 1px solid #2c3034; background: linear-gradient(#70767a, #4a4f53 45%, #0a0d0f 52%, #16191b); color: #fff; font: 12px "Open Sans", "Noto Sans", sans-serif; padding-left: 10px; }
    .orb { width: 41px; margin-top: -3px; }
    .ql { display: flex; align-items: center; gap: 8px; margin-left: 14px; width: 80px; }
    .more { width: 17px; font-size: 14px; line-height: 12px; margin-top: -10px; }
    .tk { display: flex; align-items: center; gap: 5px; width: 113px; height: 25px; margin-right: 4.300px; padding-left: 9px; box-sizing: border-box; border: 1px solid #888e92; border-radius: 3px; background: linear-gradient(#757a7e, #54585c 45%, #1c1f22 50%, #34383a); }
    .tk.on { background: linear-gradient(#33373a, #17191b 45%, #050606 50%, #101214); border-color: #5a5e62; }
    .tk .ic { margin-right: 2px; }
    .tray { display: flex; align-items: center; flex: 1; margin-left: 7px; padding-bottom: 2px; }
    .tray .lt { width: 8px; margin: 2px 7px 0 15px; font-size: 14px; }
  `;
  private chart() {
    const edge = (i: number) => Math.floor(i * 12.5);
    return html`<svg class="ic" width="600" height="300" viewBox="0 0 600 300">
      ${rowColors.map((r, k) => r.map((c, i) => svg`<rect x=${edge(i)} y=${k * 70} width=${edge(i + 1) - edge(i)} height="70" fill=${"#" + c} shape-rendering="crispEdges"/>`))}
      ${series.map((s, k) => svg`<path d=${curve(s)} fill="none" stroke=${lineColors[k]} stroke-width="1"/>`)}
      <rect x="537" y="140" width="13" height="69" fill="none" stroke="#fff" stroke-width="2"/>
      <circle cx="536.200" cy="168" r="2.600" fill="#fff" stroke="#2030c0" stroke-width=".5"/>
    </svg>`;
  }
  private browser() {
    const tipRows: [string, string, number, number][] = [["Hour M", ": 43", 44, 24.5], ["Hour L", ": 42", 40, 24.5], ["Value M", ": 1.14", 48, 35.5], ["Value L", ": 0.96", 44, 35.5]];
    const nb = (w: number, c: unknown) => html`<span class="nb" style="width:${w}px">${c}</span>`;
    return html`<div class="browser">
      <div class="tabs">
        ${tabs.map((t) => html`<div class="tab ${t.on ? "on" : ""}">${t.icon ?? nothing}${fit(t.t, t.w)}
          <span class="x">${ic(svg`<path d="M1 1l6 6M7 1L1 7" stroke="#5d6c84" stroke-width="1.900"/>`, 8, 8, "0 0 8 8")}</span></div>`)}
        <div class="plus">${ic(svg`<path d="M5 0v10M0 5h10" stroke="#3c4656" stroke-width="1.800"/>`, 11, 11, "0 0 10 10")}</div>
        <div class="wbtns"><span class="wb">${minI}</span><span class="wb">${restI}</span><span class="wb red">${closeI}</span></div>
      </div>
      <div class="nav">
        ${backIcon}
        <div class="url">${lockIcon}<span class="addr">${fit("https://", 40)}<span class="host">${fit("ims", 20)}</span>${fit(":8443/ims/html/model/verification/verification.html", 274.5)}</span>
          ${ic(svg`<path d="M.7.7h8.600L5 7z" fill="none" stroke="#a6adb8"/>`, 10, 8, "0 0 10 8")}${reloadIcon}</div>
        <div class="search"><span class="g">8</span>${triIcon("#555")}${fit("svg stroke", 53.5)}<span class="grow"></span>${magIcon}</div>
        <span class="nb" style="width:4px"></span>
        ${nb(35, dlIcon)}${nb(36, homeIcon)}${nb(34, starIcon)}<span class="vs"></span>${nb(28, clipIcon)}${nb(41, abpIcon)}${nb(0, triIcon())}
        ${nb(60, bugIcon)}<span class="vs"></span>${nb(19, triIcon())}<span class="nb" style="width:4px"></span><span class="vs"></span>${nb(42, burgerIcon)}
      </div>
      <div class="app">
        <div class="c1">${appIcon}${fit("IMS  Model Verification", 186)}</div>
        <div class="c2">${ic(svg`<path d="M6 0v8L1 4z" fill="#fff"/>`, 7, 8, "0 0 7 8")}</div>
        <div class="c2">${helpIcon}</div>
        <div class="title">${fit("Model Verification Display", 207)}</div>
        <span class="copy">${fit("© 2013", 42.5)}</span>
        <div class="logo"><span class="l1">${fit("MicroStep", 72)}</span><span class="l2">${fit("- MIS", 34)}</span></div>
      </div>
      <div class="page">
        <div class="outer">
          <div class="inner"><div class="chart">${this.chart()}
            <div class="tip"><div class="h">${fit("MAE", 27)}</div>
              ${tipRows.map(([k, v, a, b]) => html`<div class="r"><span class="k">${fit(k, a)}</span>${fit(v, b)}</div>`)}
            </div></div></div>
          <div class="btn">${fit("Do", 18)}${fit("Something", 70)}</div>
        </div>
      </div>
      <div class="foot">${fit("Browser", 67)}${fit("06.08.2014 15:44:19 LT", 206)}<span class="utc">${fit("06.08.2014 13:44:19 UTC", 219)}</span></div>
    </div>`;
  }
  private commander() {
    return html`<div class="tc">
      <div class="tbar">${floppy}<span class="ttl">${fit("[2] Total Commander 7.55a - NOT REGISTERED", 247)}</span>
        <span class="wb">${minI}</span><span class="wb">${restI}</span><span class="wb">${closeI}</span></div>
      <div class="menu">${menus.map(([t, w, g]) => html`${fit(t, w)}<span style="width:${g}px"></span>`)}<span class="grow"></span>${fit("Help", 24)}</div>
      <div class="tools">${tools.map(([w, c]) => html`<span class="tool" style="width:${w}px">${c === SEP ? html`<i class="tsep"></i>` : c}</span>`)}</div>
      <div class="drives">${drives.map(([l, i], n) => html`<span class="drv ${n === 0 ? "on" : ""}">${i}${l}</span>`)}
        <span class="d1">\\</span><span class="d2">..</span>${fit("[_none_]", 50)}<span style="width:8px"></span>${fit("4 066 068 k of 43 195 384 k free", 188)}</div>
      <div class="panels">
        <file-panel active .path=${"c:\\jlib\\css\\ims\\*.*"} .pathWidth=${103} .rows=${leftRows} .thumb=${150} .status=${"0 k / 229 k in 0 / 100 file(s), 0 / 19 dir(s)"} .statusWidth=${234}></file-panel>
        <file-panel .path=${"c:\\IMS\\tomcat\\webapps\\ims\\css\\*.*"} .pathWidth=${209} .rows=${rightRows} .thumb=${185} .status=${"0 k / 185 k in 0 / 87 file(s), 0 / 10 dir(s)"} .statusWidth=${227}></file-panel>
      </div>
      <div class="cmd"><span class="p">${fit("c:\\jlib\\css\\ims>", 89.5)}</span><span style="width:2px"></span><span class="cin">${triIcon("#000")}</span></div>
      <div class="keys">${["F3 View", "F4 Edit", "F5 Copy", "F6 Move", "F7 NewFolder", "F8 Delete", "Alt+F4 Exit"].map((k) => html`<span class="key">${k}</span>`)}</div>
      <div class="task">
        <span class="orb">${orb}</span>
        <span class="ql">${deskI}${flipI}${floppy}</span><span class="more">»</span>
        ${tasks.map(([t, i, w, on]) => html`<span class="tk ${on ? "on" : ""}">${i}${fit(t, w)}</span>`)}
        <span class="tray">${fit("EN", 14.5)}<span class="lt">&lt;</span>${infoI}<span style="width:13px"></span>${batI}<span style="width:2px"></span>${lanI}<span style="width:2px"></span>${sndI}<span style="width:8px"></span>${fit("15:44", 27)}</span>
      </div>
    </div>`;
  }
  render() {
    return html`${this.browser()}${this.commander()}`;
  }
}
